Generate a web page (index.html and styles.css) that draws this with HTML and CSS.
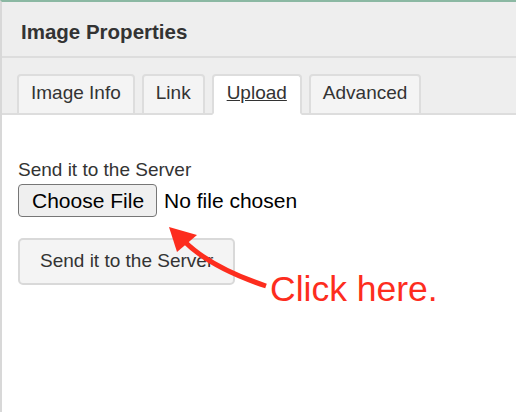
FILE: index.html
```html
<!DOCTYPE html>
<html>
<head>
<meta charset="utf-8">
<title>Image Properties</title>
<link rel="stylesheet" href="styles.css">
</head>
<body>
<div class="dialog">
  <div class="header">Image Properties</div>
  <div class="tabbar">
    <div class="tab">Image Info</div>
    <div class="tab">Link</div>
    <div class="tab active">Upload</div>
    <div class="tab">Advanced</div>
  </div>
  <div class="content">
    <div class="label">Send it to the Server</div>
    <div class="file-row">
      <span class="file-btn">Choose File</span>
      <span class="file-name">No file chosen</span>
    </div>
    <div class="send-btn">Send it to the Server</div>
  </div>
</div>
<svg class="arrow" width="516" height="412" viewBox="0 0 516 412">
  <path d="M266 286 Q210.5 267.5 184 241" fill="none" stroke="#fd2d1e" stroke-width="5" stroke-linecap="butt"/>
  <polygon points="169,227 197,235 177,252" fill="#fd2d1e"/>
</svg>
<div class="callout">Click here.</div>
</body>
</html>
```

FILE: styles.css
```css
html, body {
  margin: 0;
  padding: 0;
  background: #fff;
  height: 100%;
  overflow: hidden;
}

body {
  font-family: "Liberation Sans", Arial, Helvetica, sans-serif;
  color: #333;
}

.dialog {
  box-sizing: border-box;
  height: 100%;
  border-top: 2px solid #8bb8a3;
  border-left: 2px solid #d8d8d8;
  display: flex;
  flex-direction: column;
}

.header {
  background: #eeeeee;
  border-bottom: 2px solid #dddddd;
  height: 56px;
  box-sizing: border-box;
  padding: 3px 0 0 19px;
  line-height: 53px;
  font-size: 20.5px;
  font-weight: bold;
  color: #333;
}

.tabbar {
  background: #eeeeee;
  border-bottom: 2px solid #dddddd;
  padding: 16px 0 0 15px;
  display: flex;
  gap: 7px;
  height: 39px;
}

.tab {
  box-sizing: border-box;
  height: 41px;
  border: 2px solid #dddddd;
  border-radius: 4px 4px 0 0;
  background: #f4f4f4;
  padding: 0 12px 3px;
  line-height: 34px;
  font-size: 19px;
  color: #333;
}

.tab.active {
  background: #fff;
  border-bottom-color: #fff;
  text-decoration: underline;
  padding: 0 13px 3px;
  position: relative;
  z-index: 1;
}

.content {
  flex: 1;
  background: #fff;
  padding: 44px 16px 0;
}

.label {
  font-size: 19px;
  line-height: 22px;
  color: #333;
}

.file-row {
  margin-top: 3px;
  display: flex;
  align-items: center;
  gap: 7px;
  font-size: 21px;
  color: #000;
}

.file-btn {
  box-sizing: border-box;
  height: 33px;
  line-height: 31px;
  padding: 0 12px 0 13px;
  border: 1px solid #767676;
  border-radius: 4px;
  background: #efefef;
}

.file-name {
  line-height: 31px;
}

.send-btn {
  box-sizing: border-box;
  display: inline-block;
  margin-top: 21px;
  height: 47px;
  line-height: 42px;
  padding: 0 20px 1px;
  border: 2px solid #d9d9d9;
  border-radius: 5px;
  background: #f4f4f4;
  font-size: 19px;
  color: #333;
}

.arrow {
  position: absolute;
  left: 0;
  top: 0;
  pointer-events: none;
}

.callout {
  position: absolute;
  left: 270px;
  top: 272px;
  font-size: 35.5px;
  line-height: 35px;
  color: #fd2d1e;
}
```
